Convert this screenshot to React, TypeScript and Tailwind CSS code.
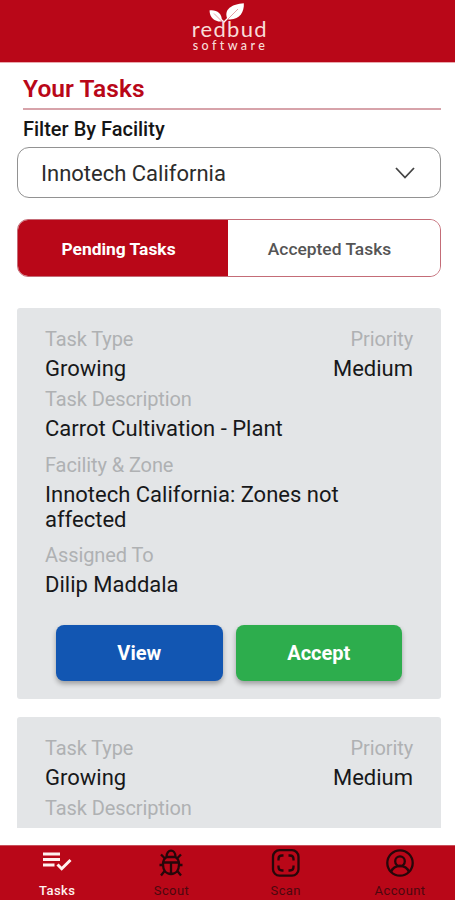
import { useState } from "react";

const tabs = ["Pending Tasks", "Accepted Tasks"] as const;

interface Task {
  id: number;
  type: string;
  priority: string;
  description?: string;
  zone?: string;
  assignee?: string;
}

const tasks: Task[] = [
  {
    id: 1,
    type: "Growing",
    priority: "Medium",
    description: "Carrot Cultivation - Plant",
    zone: "Innotech California: Zones not affected",
    assignee: "Dilip Maddala",
  },
  {
    id: 2,
    type: "Growing",
    priority: "Medium",
  },
];

function Logo() {
  return (
    <div className="flex flex-col items-center text-[#f8ddd8]">
      <svg width="38" height="20" viewBox="0 0 38 20" fill="#fff" className="ml-[-6px]">
        <path d="M2.5 7.500C9 6.500 15.500 10 14.800 18.500C8 19 3 15.500 2.500 7.500Z" />
        <path d="M36.800 0.300C37.500 9.500 32 17.800 20.500 16.300C16 6.500 25 1 36.800 0.300Z" />
        <path
          d="M13 16C16 17 17 18 16.500 20M22 14L16.500 19.500"
          fill="none"
          stroke="#fff"
          strokeWidth="1.300"
        />
        <path d="M7 10.500L14.500 18M31 6L21 16" stroke="#d4606a" strokeWidth="0.600" />
      </svg>
      <span className="mt-[-4px] mr-[-1.6px] font-['Lato'] text-[22px] leading-[20px] tracking-[1.3px]">
        redbud
      </span>
      <span className="mr-[-3px] font-['Lato'] text-[12.5px] leading-[13px] font-medium tracking-[3.4px]">
        software
      </span>
    </div>
  );
}

function TasksIcon() {
  return (
    <svg width="30" height="28" viewBox="0 0 30 28" fill="none" stroke="currentColor">
      <path d="M1 5H18M1 10.500H18M1 16H12.500" strokeWidth="3" />
      <path d="M15.500 15.500L19.700 19.700L28.500 11" strokeWidth="3" />
    </svg>
  );
}

function ScoutIcon() {
  return (
    <svg width="30" height="28" viewBox="0 0 30 28" fill="none" stroke="currentColor" strokeWidth="2.300">
      <path d="M10.500 8C10.500 -0.500 19.500 -0.500 19.500 8" />
      <path d="M11 8H19C21.500 9 23 11.500 23 15.500C23 21 20 25 15 25C10 25 7 21 7 15.500C7 11.500 8.500 9 11 8ZM7.500 13.500H22.500M15 13.500V24.500" />
      <path d="M9 9.500L5 5.500M21 9.500L25 5.500M7.500 16H3.500M22.500 16H26.500M9 21.500L5 26.500M21 21.500L25 26.500" />
    </svg>
  );
}

function ScanIcon() {
  return (
    <svg width="30" height="28" viewBox="0 0 30 28" fill="none" stroke="currentColor" strokeWidth="2.300">
      <rect x="2" y="1.200" width="25.500" height="25.500" rx="6.500" />
      <path d="M12.500 6.500H11C8.500 6.500 7.500 7.500 7.500 10V11.500M17.500 6.500H19C21.500 6.500 22.500 7.500 22.500 10V11.500M7.500 16.500V18C7.500 20.500 8.500 21.500 11 21.500H12.500M22.500 16.500V18C22.500 20.500 21.500 21.500 19 21.500H17.500" />
    </svg>
  );
}

function AccountIcon() {
  return (
    <svg width="30" height="28" viewBox="0 0 30 28" fill="none" stroke="currentColor" strokeWidth="2.300">
      <circle cx="15" cy="14" r="12.700" />
      <circle cx="15" cy="12.200" r="4.800" />
      <path d="M6 23C7.500 19 11 17 15 17C19 17 22.500 19 24 23" />
    </svg>
  );
}

const navItems = [
  { label: "Tasks", icon: TasksIcon },
  { label: "Scout", icon: ScoutIcon },
  { label: "Scan", icon: ScanIcon },
  { label: "Account", icon: AccountIcon },
];

function Field({ label, value }: { label: string; value?: string }) {
  return (
    <div>
      <p className="text-[20px] leading-[30px] tracking-[-0.1px] text-[#afb1b3]">{label}</p>
      {value && (
        <p className="pt-[2px] pb-px text-[22px] leading-[25px] text-[#17181a]">{value}</p>
      )}
    </div>
  );
}

function TaskCard({ task }: { task: Task }) {
  return (
    <article className="h-[391px] shrink-0 rounded-[3px] bg-[#e3e5e7] px-7 pt-4">
      <div className="flex justify-between">
        <Field label="Task Type" value={task.type} />
        <div className="text-right">
          <Field label="Priority" value={task.priority} />
        </div>
      </div>
      <div className="mt-[2px]">
        <Field label="Task Description" value={task.description} />
      </div>
      {task.zone && (
        <div className="mt-2">
          <Field label="Facility & Zone" value={task.zone} />
        </div>
      )}
      {task.assignee && (
        <>
          <div className="mt-[7px]">
            <Field label="Assigned To" value={task.assignee} />
          </div>
          <div className="mt-[27px] flex gap-[13px] px-[11px] text-[20px] font-bold text-white">
            <button
              type="button"
              className="h-[56px] flex-1 rounded-[8px] bg-[#1256b2] pb-px shadow-[0_3px_5px_rgba(0,0,0,0.3)]"
            >
              View
            </button>
            <button
              type="button"
              className="h-[56px] flex-1 rounded-[8px] bg-[#2dad4d] pb-px shadow-[0_3px_5px_rgba(0,0,0,0.3)]"
            >
              Accept
            </button>
          </div>
        </>
      )}
    </article>
  );
}

export default function App() {
  const [activeTab, setActiveTab] = useState<string>(tabs[0]);
  const [activeNav, setActiveNav] = useState("Tasks");

  return (
    <div className="flex h-[900px] w-full flex-col overflow-hidden bg-white font-['Roboto',sans-serif]">
      <header className="flex h-[63px] shrink-0 justify-center border-b border-[#eaa9ad] bg-[#b90718] pt-[3px] pl-[3px]">
        <Logo />
      </header>

      <main className="flex min-h-0 flex-1 flex-col pr-[14px] pl-[17px]">
        <h1 className="ml-[6px] h-[47px] border-b-2 border-[#d7a3aa] pt-[11px] text-[24.5px] leading-[30px] font-semibold tracking-[0.1px] text-[#b90718]">
          Your Tasks
        </h1>
        <p className="ml-[6px] pt-[6px] text-[20px] leading-[26px] font-medium text-[#151515]">
          Filter By Facility
        </p>
        <button
          type="button"
          className="mt-[5px] flex h-[51px] shrink-0 items-center justify-between rounded-[12px] border border-[#929292] pt-px pr-[25px] pl-[23px] text-[22px] text-[#2c2c2c]"
        >
          Innotech California
          <svg width="20" height="12" viewBox="0 0 20 12" fill="none" stroke="#444" strokeWidth="1.800">
            <path d="M1 1L10 10.500L19 1" />
          </svg>
        </button>

        <div className="mt-[21px] flex h-[58px] shrink-0 overflow-hidden rounded-[11px] border border-[#c46c77]">
          {tabs.map((tab) => (
            <button
              key={tab}
              type="button"
              onClick={() => setActiveTab(tab)}
              className={`pt-[2px] pr-[9px] text-[17.4px] first:w-[210px] last:flex-1 ${
                activeTab === tab
                  ? "bg-[#b90718] font-bold text-white"
                  : "bg-white font-medium text-[#555]"
              }`}
            >
              {tab}
            </button>
          ))}
        </div>

        <div className="mt-[31px] mb-[17px] flex min-h-0 flex-1 flex-col gap-[18px] overflow-hidden">
          {tasks.map((task) => (
            <TaskCard key={task.id} task={task} />
          ))}
        </div>
      </main>

      <nav className="flex h-[55px] shrink-0 border-t border-[#c9505b] bg-[#b90718]">
        {navItems.map(({ label, icon: Icon }) => (
          <button
            key={label}
            type="button"
            onClick={() => setActiveNav(label)}
            className={`flex w-[114.3px] shrink-0 flex-col items-center pt-[3px] ${
              activeNav === label ? "text-[#fff0ee]" : "text-[#26070a]"
            }`}
          >
            <Icon />
            <span
              className={`mt-[6px] text-[13px] leading-[16px] tracking-[0.4px] ${
                activeNav === label ? "font-medium" : "text-[#4d070f]"
              }`}
            >
              {label}
            </span>
          </button>
        ))}
      </nav>
    </div>
  );
}
